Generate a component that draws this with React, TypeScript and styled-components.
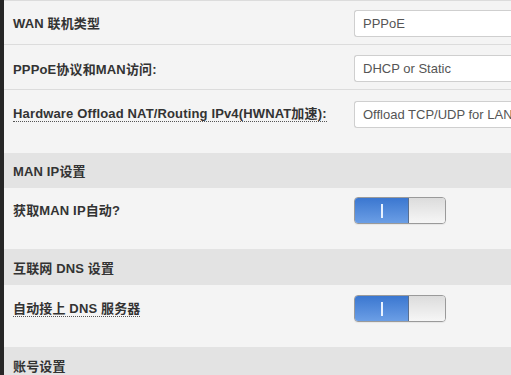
import React from "react";
import styled, { createGlobalStyle } from "styled-components";

const Global = createGlobalStyle`
  html, body { margin: 0; padding: 0; background: #f4f4f4; }
  body { font-family: Arial, "Liberation Sans", "Noto Sans CJK SC", sans-serif; }
`;

const Page = styled.div`
  display: flex;
  width: 511px;
  height: 375px;
  overflow: hidden;
`;

const SideStrip = styled.div`
  width: 4px;
  flex: none;
  background: #262626;
`;

const Content = styled.div`
  flex: 1;
  display: flex;
  flex-direction: column;
  min-width: 0;
`;

const TopGap = styled.div`
  height: 2px;
  background: #f4f4f4;
  border-bottom: 1px solid #dcdcdc;
`;

const Row = styled.div<{ $h: number; $top?: number; $last?: boolean }>`
  display: grid;
  grid-template-columns: 350px 1fr;
  align-items: start;
  height: ${(p) => p.$h}px;
  padding-top: ${(p) => p.$top ?? 9}px;
  box-sizing: border-box;
  background: #f4f4f4;
  border-bottom: ${(p) => (p.$last ? "none" : "1px solid #dcdcdc")};
  flex: none;
`;

const Label = styled.div<{ $dotted?: boolean; $mt: number }>`
  padding-left: 9px;
  margin-top: ${(p) => p.$mt}px;
  font-size: 13px;
  letter-spacing: 0.15px;
  font-weight: bold;
  color: #333;
  white-space: nowrap;
  line-height: 16px;
  span {
    border-bottom: ${(p) => (p.$dotted ? "1px dotted #555" : "none")};
  }
`;

const Input = styled.div`
  height: 27px;
  box-sizing: border-box;
  border: 1px solid #cfcfcf;
  border-right: none;
  border-radius: 3px 0 0 3px;
  background: #fff;
  padding-left: 8px;
  font-size: 13px;
  line-height: 25px;
  color: #555;
  white-space: nowrap;
  overflow: hidden;
`;

const Header = styled.div<{ $h: number }>`
  height: ${(p) => p.$h}px;
  box-sizing: border-box;
  background: #e3e3e3;
  padding-left: 9px;
  display: flex;
  align-items: center;
  font-size: 13px;
  letter-spacing: 0.15px;
  font-weight: bold;
  color: #333;
  flex: none;
`;

const Toggle = styled.div`
  width: 92px;
  height: 27px;
  box-sizing: border-box;
  display: flex;
  border: 1px solid #9a9a9a;
  border-radius: 4px;
  overflow: hidden;
  box-shadow: 0 1px 1px rgba(0, 0, 0, 0.06);
`;

const ToggleOn = styled.div`
  width: 53px;
  background: linear-gradient(#3b77d0, #6b9ee5);
  border-right: 1px solid #5a6f8f;
  display: flex;
  align-items: center;
  justify-content: center;
`;

const Bar = styled.div`
  width: 2px;
  height: 14px;
  background: #e8f2ff;
`;

const ToggleOff = styled.div`
  flex: 1;
  background: linear-gradient(#dcdcdc, #f6f6f6);
`;

const ToggleCell = styled.div``;

export default function App() {
  return (
    <Page>
      <Global />
      <SideStrip />
      <Content>
        <TopGap />
        <Row $h={44} $top={9}>
          <Label $mt={6}><span>WAN 联机类型</span></Label>
          <Input>PPPoE</Input>
        </Row>
        <Row $h={45} $top={10}>
          <Label $mt={7}><span>PPPoE协议和MAN访问:</span></Label>
          <Input>DHCP or Static</Input>
        </Row>
        <Row $h={63} $top={11} $last>
          <Label $mt={5} $dotted><span>Hardware Offload NAT/Routing IPv4(HWNAT加速):</span></Label>
          <Input>Offload TCP/UDP for LAN/WLAN</Input>
        </Row>
        <Header $h={35}>MAN IP设置</Header>
        <Row $h={61} $top={9} $last>
          <Label $mt={6}><span>获取MAN IP自动?</span></Label>
          <ToggleCell>
            <Toggle>
              <ToggleOn><Bar /></ToggleOn>
              <ToggleOff />
            </Toggle>
          </ToggleCell>
        </Row>
        <Header $h={36}>互联网 DNS 设置</Header>
        <Row $h={62} $top={10} $last>
          <Label $mt={6} $dotted><span>自动接上 DNS 服务器</span></Label>
          <ToggleCell>
            <Toggle>
              <ToggleOn><Bar /></ToggleOn>
              <ToggleOff />
            </Toggle>
          </ToggleCell>
        </Row>
        <Header $h={36}>账号设置</Header>
      </Content>
    </Page>
  );
}
